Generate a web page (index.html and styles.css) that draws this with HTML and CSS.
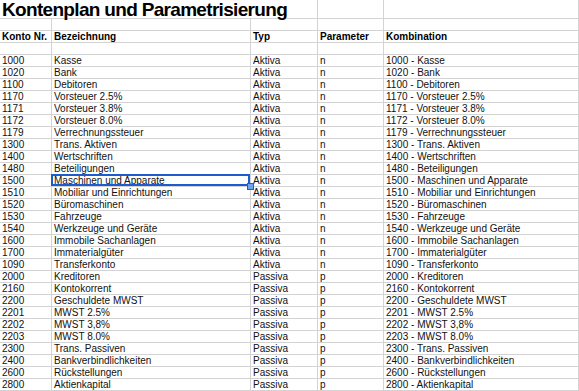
FILE: index.html
```html
<!DOCTYPE html>
<html lang="de">
<head>
<meta charset="utf-8">
<title>Kontenplan und Parametrisierung</title>
<link rel="stylesheet" href="styles.css">
</head>
<body>
<div class="sheet">
  <div class="c title">Kontenplan und Parametrisierung</div><div class="c"></div><div class="c"></div>
  <div class="c"></div><div class="c"></div><div class="c"></div><div class="c"></div><div class="c"></div>
  <div class="c h">Konto Nr.</div><div class="c h">Bezeichnung</div><div class="c h">Typ</div><div class="c h">Parameter</div><div class="c h">Kombination</div>
  <div class="c"></div><div class="c"></div><div class="c"></div><div class="c"></div><div class="c"></div>
  <div class="c">1000</div><div class="c">Kasse</div><div class="c">Aktiva</div><div class="c">n</div><div class="c">1000 - Kasse</div>
  <div class="c">1020</div><div class="c">Bank</div><div class="c">Aktiva</div><div class="c">n</div><div class="c">1020 - Bank</div>
  <div class="c">1100</div><div class="c">Debitoren</div><div class="c">Aktiva</div><div class="c">n</div><div class="c">1100 - Debitoren</div>
  <div class="c">1170</div><div class="c">Vorsteuer 2.5%</div><div class="c">Aktiva</div><div class="c">n</div><div class="c">1170 - Vorsteuer 2.5%</div>
  <div class="c">1171</div><div class="c">Vorsteuer 3.8%</div><div class="c">Aktiva</div><div class="c">n</div><div class="c">1171 - Vorsteuer 3.8%</div>
  <div class="c">1172</div><div class="c">Vorsteuer 8.0%</div><div class="c">Aktiva</div><div class="c">n</div><div class="c">1172 - Vorsteuer 8.0%</div>
  <div class="c">1179</div><div class="c">Verrechnungssteuer</div><div class="c">Aktiva</div><div class="c">n</div><div class="c">1179 - Verrechnungssteuer</div>
  <div class="c">1300</div><div class="c">Trans. Aktiven</div><div class="c">Aktiva</div><div class="c">n</div><div class="c">1300 - Trans. Aktiven</div>
  <div class="c">1400</div><div class="c">Wertschriften</div><div class="c">Aktiva</div><div class="c">n</div><div class="c">1400 - Wertschriften</div>
  <div class="c">1480</div><div class="c">Beteiligungen</div><div class="c">Aktiva</div><div class="c">n</div><div class="c">1480 - Beteiligungen</div>
  <div class="c">1500</div><div class="c selected">Maschinen und Apparate<span class="handle"></span></div><div class="c">Aktiva</div><div class="c">n</div><div class="c">1500 - Maschinen und Apparate</div>
  <div class="c">1510</div><div class="c">Mobiliar und Einrichtungen</div><div class="c">Aktiva</div><div class="c">n</div><div class="c">1510 - Mobiliar und Einrichtungen</div>
  <div class="c">1520</div><div class="c">Büromaschinen</div><div class="c">Aktiva</div><div class="c">n</div><div class="c">1520 - Büromaschinen</div>
  <div class="c">1530</div><div class="c">Fahrzeuge</div><div class="c">Aktiva</div><div class="c">n</div><div class="c">1530 - Fahrzeuge</div>
  <div class="c">1540</div><div class="c">Werkzeuge und Geräte</div><div class="c">Aktiva</div><div class="c">n</div><div class="c">1540 - Werkzeuge und Geräte</div>
  <div class="c">1600</div><div class="c">Immobile Sachanlagen</div><div class="c">Aktiva</div><div class="c">n</div><div class="c">1600 - Immobile Sachanlagen</div>
  <div class="c">1700</div><div class="c">Immaterialgüter</div><div class="c">Aktiva</div><div class="c">n</div><div class="c">1700 - Immaterialgüter</div>
  <div class="c">1090</div><div class="c">Transferkonto</div><div class="c">Aktiva</div><div class="c">n</div><div class="c">1090 - Transferkonto</div>
  <div class="c">2000</div><div class="c">Kreditoren</div><div class="c">Passiva</div><div class="c">p</div><div class="c">2000 - Kreditoren</div>
  <div class="c">2160</div><div class="c">Kontokorrent</div><div class="c">Passiva</div><div class="c">p</div><div class="c">2160 - Kontokorrent</div>
  <div class="c">2200</div><div class="c">Geschuldete MWST</div><div class="c">Passiva</div><div class="c">p</div><div class="c">2200 - Geschuldete MWST</div>
  <div class="c">2201</div><div class="c">MWST 2.5%</div><div class="c">Passiva</div><div class="c">p</div><div class="c">2201 - MWST 2.5%</div>
  <div class="c">2202</div><div class="c">MWST 3,8%</div><div class="c">Passiva</div><div class="c">p</div><div class="c">2202 - MWST 3,8%</div>
  <div class="c">2203</div><div class="c">MWST 8.0%</div><div class="c">Passiva</div><div class="c">p</div><div class="c">2203 - MWST 8.0%</div>
  <div class="c">2300</div><div class="c">Trans. Passiven</div><div class="c">Passiva</div><div class="c">p</div><div class="c">2300 - Trans. Passiven</div>
  <div class="c">2400</div><div class="c">Bankverbindlichkeiten</div><div class="c">Passiva</div><div class="c">p</div><div class="c">2400 - Bankverbindlichkeiten</div>
  <div class="c">2600</div><div class="c">Rückstellungen</div><div class="c">Passiva</div><div class="c">p</div><div class="c">2600 - Rückstellungen</div>
  <div class="c">2800</div><div class="c">Aktienkapital</div><div class="c">Passiva</div><div class="c">p</div><div class="c">2800 - Aktienkapital</div>
</div>
</body>
</html>
```
FILE: styles.css
```css
html, body {
  margin: 0;
  padding: 0;
  background: #ffffff;
}
body {
  font-family: "Liberation Sans", Arial, sans-serif;
  color: #111111;
  overflow: hidden;
}
.sheet {
  display: grid;
  grid-template-columns: 52px 199px 67px 66px 1fr;
  grid-auto-rows: 12px;
  grid-template-rows: 19px;
}
.c {
  box-sizing: border-box;
  border-right: 1px solid #d3d3d3;
  border-bottom: 1px solid #d3d3d3;
  padding: 0 2px;
  font-size: 10px;
  line-height: 11px;
  white-space: nowrap;
  overflow: visible;
}
.title {
  grid-column: span 3;
  font-size: 19px;
  font-weight: bold;
  line-height: 17px;
  padding: 1px 0 0 2px;
  color: #000;
  letter-spacing: -0.68px;
}
.h {
  font-weight: bold;
  color: #000;
}
.selected {
  position: relative;
}
.selected::after {
  content: "";
  position: absolute;
  left: -1px;
  top: -1px;
  right: 0;
  bottom: 0;
  border: 2px solid #1d5ccf;
}
.handle {
  position: absolute;
  right: -4px;
  bottom: -4px;
  width: 5px;
  height: 5px;
  background: #6aa3ee;
  border: 1px solid #1d5ccf;
  z-index: 2;
}
```
